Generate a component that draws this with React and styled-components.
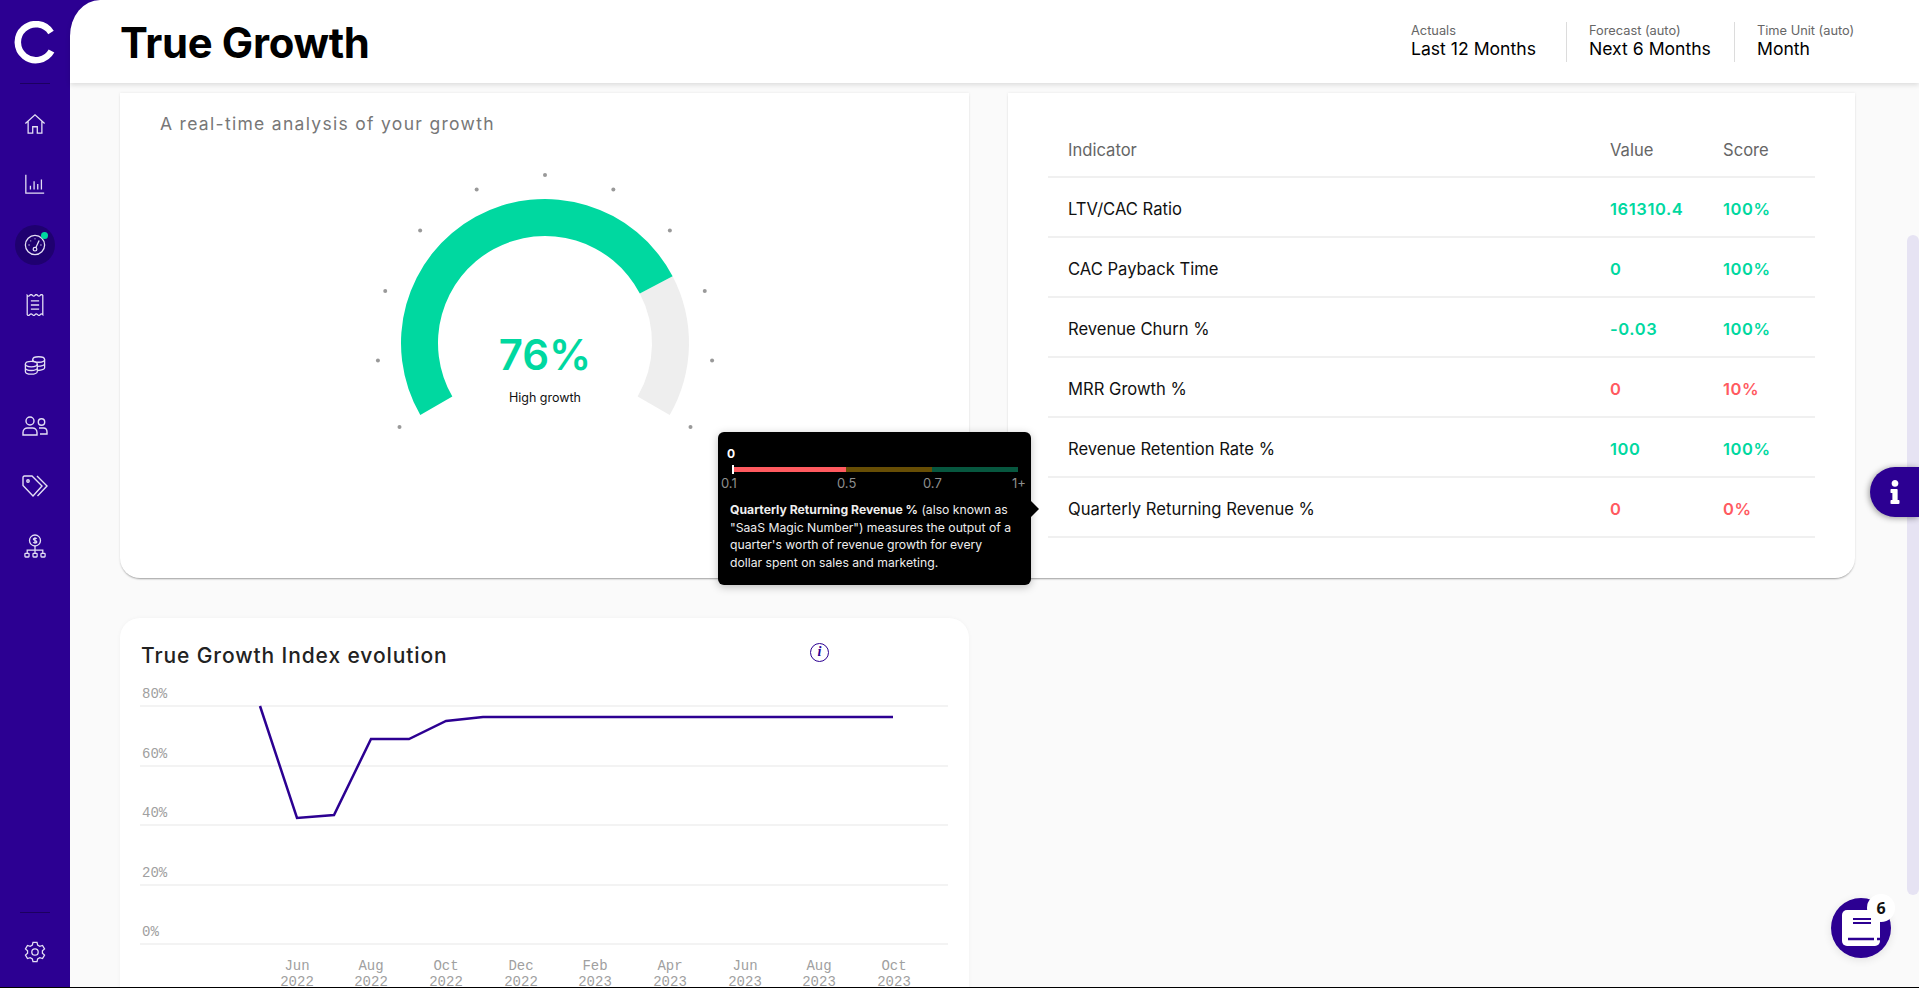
import React from "react";
import styled, { createGlobalStyle } from "styled-components";
import { FaInfo } from "react-icons/fa";

const PURPLE = "#2c0092";
const GREEN = "#00d8a0";
const RED = "#ff5a5f";
const FONT = `"Inter", "Liberation Sans", sans-serif`;
const MONO = `"Liberation Mono", "DejaVu Sans Mono", monospace`;

const GlobalStyle = createGlobalStyle`
  html, body {
    margin: 0;
    height: 100%;
    overflow: hidden;
    background: #000;
  }
  * {
    box-sizing: border-box;
  }
`;

const filters = [
  { label: "Actuals", value: "Last 12 Months", width: 155 },
  { label: "Forecast (auto)", value: "Next 6 Months", width: 168 },
  { label: "Time Unit (auto)", value: "Month", width: 125 },
];

const indicators = [
  { name: "LTV/CAC Ratio", value: "161310.4", score: "100%", good: true },
  { name: "CAC Payback Time", value: "0", score: "100%", good: true },
  { name: "Revenue Churn %", value: "-0.03", score: "100%", good: true },
  { name: "MRR Growth %", value: "0", score: "10%", good: false },
  { name: "Revenue Retention Rate %", value: "100", score: "100%", good: true },
  { name: "Quarterly Returning Revenue %", value: "0", score: "0%", good: false },
];

const HomeIcon = () => (
  <NavSvg viewBox="0 0 24 24">
    <path d="M1.5 11.5 12 2l10.500 9.500M4.500 9v13h5v-7h5v7h5V9" />
  </NavSvg>
);

const BarsIcon = () => (
  <NavSvg viewBox="0 0 24 24">
    <path d="M2 2v20h20M7 18v-4M11 18V9M15 18v-6M19 18V7" />
  </NavSvg>
);

const GaugeIcon = () => (
  <NavSvg viewBox="0 0 24 24">
    <circle cx="12" cy="12" r="10.500" />
    <circle cx="12" cy="16.500" r="2" />
    <path d="M13 14.700 16.500 7M5 12h1M7 7.500h.8M12 5v.8M19 12h-1" />
  </NavSvg>
);

const ReceiptIcon = () => (
  <NavSvg viewBox="0 0 24 24">
    <path d="M3.500 1.500q1.400 1.800 2.800 0t2.900 0 2.800 0 2.800 0 2.900 0 2.800 0v21q-1.400-1.800-2.800 0t-2.900 0-2.800 0-2.800 0-2.900 0-2.800 0zM7.500 7.500h9M7.500 12h9M7.500 16.500h9" />
  </NavSvg>
);

const CoinsIcon = () => (
  <NavSvg viewBox="0 0 24 24">
    <ellipse cx="16" cy="6" rx="6.500" ry="3" />
    <ellipse cx="8" cy="11" rx="6.500" ry="3" />
    <path d="M1.500 11v8c0 1.700 2.900 3 6.500 3s6.500-1.300 6.500-3v-8M1.500 15c0 1.700 2.900 3 6.500 3s6.500-1.300 6.500-3M9.500 6v2M22.500 6v9c0 1.400-2 2.600-8 3M22.500 10.500c0 1.400-3 2.600-8 3" />
  </NavSvg>
);

const UsersIcon = () => (
  <NavSvg viewBox="0 0 26 20" $width={26} $height={20}>
    <circle cx="8" cy="5" r="4" />
    <circle cx="19.500" cy="6" r="3.200" />
    <path d="M1 19v-2.500C1 13.500 3.500 12 5.500 12h5c2 0 4.500 1.500 4.500 4.500V19zM17 12h4.500c2 0 3.500 1.500 3.500 4v2h-7" />
  </NavSvg>
);

const TagsIcon = () => (
  <NavSvg viewBox="0 0 26 22" $width={26} $height={22}>
    <path d="M1 2.500C1 1.500 1.500 1 2.500 1H10l10 10-9 10L1 10.500zM15 1l10 10-9.500 10" />
    <circle cx="6" cy="6" r="1.200" />
  </NavSvg>
);

const OrgIcon = () => (
  <NavSvg viewBox="0 0 24 26" $width={22} $height={24}>
    <circle cx="12" cy="7" r="6" />
    <path d="M14 5c-.8-1-3.500-1-3.800.5C10 7 14 6.800 14 8.500c0 1.500-3 1.500-4 .5M12 3.500v7M12 13v4M3.500 21v-3.500h17V21M12 17.500V21" />
    <rect x="1" y="21" width="4.500" height="4" rx=".8" />
    <rect x="9.800" y="21" width="4.500" height="4" rx=".8" />
    <rect x="18.500" y="21" width="4.500" height="4" rx=".8" />
  </NavSvg>
);

const SettingsIcon = () => (
  <NavSvg viewBox="0 0 24 24">
    <circle cx="12" cy="12" r="3.500" />
    <path d="M9.800 1.500h4.400l.7 3 2.300 1.300 3-.9 2.200 3.800-2.300 2.100v2.400l2.300 2.100-2.200 3.800-3-.9-2.300 1.300-.7 3H9.800l-.7-3-2.300-1.300-3 .9-2.200-3.800 2.300-2.100v-2.400L1.600 8.700l2.200-3.800 3 .9 2.300-1.300z" />
  </NavSvg>
);

const navItems = [
  { icon: HomeIcon },
  { icon: BarsIcon },
  { icon: GaugeIcon, active: true },
  { icon: ReceiptIcon },
  { icon: CoinsIcon },
  { icon: UsersIcon },
  { icon: TagsIcon },
  { icon: OrgIcon },
];

const polar = (r, deg) => {
  const a = (deg * Math.PI) / 180;
  return [200 + r * Math.cos(a), 200 - r * Math.sin(a)];
};

const arcPath = (from, to, outer, inner) => {
  const [x1, y1] = polar(outer, from);
  const [x2, y2] = polar(outer, to);
  const [x3, y3] = polar(inner, to);
  const [x4, y4] = polar(inner, from);
  const large = from - to > 180 ? 1 : 0;
  return `M${x1} ${y1}A${outer} ${outer} 0 ${large} 1 ${x2} ${y2}L${x3} ${y3}A${inner} ${inner} 0 ${large} 0 ${x4} ${y4}Z`;
};

const Gauge = ({ percent }) => {
  const end = 210 - 240 * (percent / 100);
  const dots = Array.from({ length: 11 }, (_, i) => polar(168, 210 - i * 24));
  return (
    <GaugeSvg viewBox="0 0 400 300">
      {dots.map(([x, y], i) => (
        <circle key={i} cx={x} cy={y} r="2" fill="#999" />
      ))}
      <path d={arcPath(end, -30, 144, 107)} fill="#eeeeee" />
      <path d={arcPath(210, end, 144, 107)} fill={GREEN} />
      <GaugeValue x="200" y="227" textAnchor="middle">
        {percent}%
      </GaugeValue>
      <GaugeLabel x="200" y="259" textAnchor="middle">
        High growth
      </GaugeLabel>
    </GaugeSvg>
  );
};

const chartLines = [
  { label: "80%", y: 26 },
  { label: "60%", y: 86 },
  { label: "40%", y: 145 },
  { label: "20%", y: 205 },
  { label: "0%", y: 264 },
];

const chartMonths = [
  ["Jun", 177],
  ["Aug", 251],
  ["Oct", 326],
  ["Dec", 401],
  ["Feb", 475],
  ["Apr", 550],
  ["Jun", 625],
  ["Aug", 699],
  ["Oct", 774],
];

const monthYears = ["2022", "2022", "2022", "2022", "2023", "2023", "2023", "2023", "2023"];

const LineChart = () => (
  <ChartSvg viewBox="0 0 849 320">
    {chartLines.map((line) => (
      <g key={line.label}>
        <line x1="20" x2="828" y1={line.y} y2={line.y} stroke="#efefef" strokeWidth="1.500" />
        <AxisText x="22" y={line.y - 8}>
          {line.label}
        </AxisText>
      </g>
    ))}
    <polyline
      points="140,26 177,138 214,135 251,59 289,59 326,41 363,37 773,37"
      fill="none"
      stroke={PURPLE}
      strokeWidth="2.500"
    />
    {chartMonths.map(([month, x], i) => (
      <g key={`${month}${i}`}>
        <AxisText x={x} y="290" textAnchor="middle">
          {month}
        </AxisText>
        <AxisText x={x} y="306" textAnchor="middle">
          {monthYears[i]}
        </AxisText>
      </g>
    ))}
  </ChartSvg>
);

const App = () => {
  return (
    <Page>
      <GlobalStyle />
      <Sidebar>
        <LogoBlock>
          <LogoSvg viewBox="0 0 44 44">
            <path
              d="M38 11.500A18 18 0 1 0 38.500 30"
              fill="none"
              stroke="#fff"
              strokeWidth="6.500"
            />
          </LogoSvg>
        </LogoBlock>
        <Nav>
          {navItems.map((item, index) => (
            <NavItem key={index}>
              <NavBubble $active={item.active}>
                <item.icon />
                {item.active && <NavDot />}
              </NavBubble>
            </NavItem>
          ))}
        </Nav>
        <SidebarFooter>
          <SettingsIcon />
        </SidebarFooter>
      </Sidebar>
      <Main>
        <Header>
          <Title>True Growth</Title>
          <Filters>
            {filters.map((filter, index) => (
              <Filter key={filter.label} $width={filter.width} $first={index === 0}>
                <FilterLabel>{filter.label}</FilterLabel>
                <FilterValue>{filter.value}</FilterValue>
              </Filter>
            ))}
          </Filters>
        </Header>
        <Content>
          <Cards>
            <IndexCard>
              <Subtitle>A real-time analysis of your growth</Subtitle>
              <Gauge percent={76} />
            </IndexCard>
            <TableCard>
              <TableHead>
                <HeadCell>Indicator</HeadCell>
                <HeadCell>Value</HeadCell>
                <HeadCell>Score</HeadCell>
              </TableHead>
              {indicators.map((row) => (
                <TableRow key={row.name}>
                  <NameCell>{row.name}</NameCell>
                  <ScoreCell $good={row.good}>{row.value}</ScoreCell>
                  <ScoreCell $good={row.good}>{row.score}</ScoreCell>
                </TableRow>
              ))}
            </TableCard>
            <Tooltip>
              <TipValue>0</TipValue>
              <TipBar>
                <TipSegment $width={114} $color="#ff5a5f" />
                <TipSegment $width={86} $color="#674e05" />
                <TipSegment $width={86} $color="#07573f" />
                <TipTick />
              </TipBar>
              <TipScale>
                <TipMark $width={116}>0.1</TipMark>
                <TipMark $width={86}>0.5</TipMark>
                <TipMark $width={89}>0.7</TipMark>
                <TipMark $width={20}>1+</TipMark>
              </TipScale>
              <TipText>
                <TipStrong>Quarterly Returning Revenue %</TipStrong> (also known as
                <br />
                "SaaS Magic Number") measures the output of a
                <br />
                quarter's worth of revenue growth for every
                <br />
                dollar spent on sales and marketing.
              </TipText>
            </Tooltip>
            <ChartCard>
              <ChartHeader>
                <ChartTitle>True Growth Index evolution</ChartTitle>
                <InfoBadge>i</InfoBadge>
              </ChartHeader>
              <LineChart />
            </ChartCard>
          </Cards>
          <ScrollThumb />
          <InfoTab>
            <FaInfo size={24} color="#fff" />
          </InfoTab>
          <NotesButton>
            <svg width="38" height="36" viewBox="0 0 38 36">
              <rect width="38" height="36" rx="5" fill="#fff" />
              <path d="M11 9h18M11 13h18" stroke={PURPLE} strokeWidth="1.800" />
              <path d="M6 29h26M35 29h3" stroke={PURPLE} strokeWidth="2.500" />
            </svg>
            <NotesCount>6</NotesCount>
          </NotesButton>
        </Content>
      </Main>
    </Page>
  );
};

export default App;

const Page = styled.div`
  display: flex;
  height: 987px;
  font-family: ${FONT};
  overflow: hidden;
`;

const Sidebar = styled.aside`
  display: flex;
  flex-direction: column;
  align-items: center;
  width: 70px;
  flex: none;
  background: ${PURPLE};
`;

const LogoBlock = styled.div`
  display: flex;
  align-items: center;
  justify-content: center;
  width: 30px;
  height: 84px;
  padding-top: 2px;
  flex: none;
  border-bottom: 1px solid #1c0060;
`;

const LogoSvg = styled.svg`
  width: 44px;
  height: 44px;
  flex: none;
`;

const Nav = styled.nav`
  display: flex;
  flex-direction: column;
  padding-top: 10px;
  flex: 1;
`;

const NavItem = styled.div`
  display: flex;
  align-items: center;
  justify-content: center;
  height: 60.3px;
`;

const NavBubble = styled.div`
  position: relative;
  display: flex;
  align-items: center;
  justify-content: center;
  width: 40px;
  height: 40px;
  border-radius: 50%;
  background: ${(props) => (props.$active ? "#1f0070" : "transparent")};
`;

const NavDot = styled.span`
  position: absolute;
  top: 7px;
  right: 7px;
  width: 7px;
  height: 7px;
  border-radius: 50%;
  background: ${GREEN};
`;

const NavSvg = styled.svg`
  width: ${(props) => props.$width || 22}px;
  height: ${(props) => props.$height || 22}px;
  flex: none;
  fill: none;
  stroke: #e4dff5;
  stroke-width: 1.4;
`;

const SidebarFooter = styled.div`
  display: flex;
  align-items: center;
  justify-content: center;
  width: 30px;
  height: 75px;
  padding-top: 4px;
  flex: none;
  border-top: 1px solid #1c0060;
`;

const Main = styled.main`
  display: flex;
  flex-direction: column;
  flex: 1;
  min-width: 0;
  background: ${PURPLE};
`;

const Header = styled.header`
  position: relative;
  z-index: 2;
  display: flex;
  align-items: center;
  justify-content: space-between;
  height: 83px;
  flex: none;
  padding: 0 60px 0 50px;
  background: #fff;
  border-top-left-radius: 30px 36px;
  box-shadow: 0 2px 5px rgba(0, 0, 0, 0.12);
`;

const Title = styled.h1`
  margin: 2px 0 0;
  font-size: 41.800px;
  font-weight: 700;
  letter-spacing: -0.3px;
  color: #000;
`;

const Filters = styled.div`
  display: flex;
`;

const Filter = styled.div`
  display: flex;
  flex-direction: column;
  width: ${(props) => props.$width}px;
  height: 40px;
  padding-top: 1px;
  padding-left: ${(props) => (props.$first ? 0 : 22)}px;
  border-left: ${(props) => (props.$first ? "none" : "1px solid #dcdcdc")};
`;

const FilterLabel = styled.div`
  font-size: 12.800px;
  line-height: 15px;
  color: #666;
`;

const FilterValue = styled.div`
  font-size: 17.600px;
  line-height: 21px;
  color: #000;
`;

const Content = styled.div`
  position: relative;
  flex: 1;
  min-height: 0;
  padding: 10px 64px 0 50px;
  background: #fafafa;
  overflow: hidden;
`;

const Cards = styled.div`
  position: relative;
  display: grid;
  grid-template-columns: 1fr 1fr;
  grid-template-rows: 485px auto;
  column-gap: 39px;
  row-gap: 40px;
`;

const TopCard = styled.section`
  background: #fff;
  border-radius: 0 0 20px 20px;
  box-shadow: 0 2px 2px -1px rgba(0, 0, 0, 0.35), 0 0 3px rgba(0, 0, 0, 0.08);
`;

const IndexCard = styled(TopCard)`
  display: flex;
  flex-direction: column;
  align-items: center;
  padding-top: 21px;
`;

const Subtitle = styled.div`
  align-self: flex-start;
  padding-left: 40px;
  font-size: 17.500px;
  line-height: 20px;
  letter-spacing: 1.3px;
  color: #777;
`;

const GaugeSvg = styled.svg`
  width: 400px;
  height: 300px;
  margin-top: 9px;
`;

const GaugeValue = styled.text`
  font-family: ${FONT};
  font-size: 42px;
  font-weight: 600;
  fill: ${GREEN};
`;

const GaugeLabel = styled.text`
  font-family: ${FONT};
  font-size: 12.500px;
  fill: #111;
`;

const TableCard = styled(TopCard)`
  padding: 29px 40px 40px;
`;

const tableColumns = `
  display: grid;
  grid-template-columns: 542px 113px 1fr;
  align-items: center;
  padding-left: 20px;
  border-bottom: 2px solid #f0f0f0;
`;

const TableHead = styled.div`
  ${tableColumns}
  height: 56px;
  padding-top: 2px;
`;

const HeadCell = styled.div`
  font-size: 16.600px;
  color: #666;
`;

const TableRow = styled.div`
  ${tableColumns}
  height: 60px;
  padding-top: 4px;
`;

const NameCell = styled.div`
  font-size: 16.600px;
  color: #111;
`;

const ScoreCell = styled.div`
  font-size: 16.500px;
  font-weight: 600;
  letter-spacing: 0.6px;
  color: ${(props) => (props.$good ? GREEN : RED)};
`;

const Tooltip = styled.div`
  position: absolute;
  z-index: 3;
  left: 598px;
  top: 339px;
  width: 313px;
  height: 153px;
  padding: 14px 12px 0 9px;
  background: #000;
  border-radius: 6px;
  box-shadow: 0 2px 8px rgba(0, 0, 0, 0.25);
  color: #fff;
  &::after {
    content: "";
    position: absolute;
    top: 69px;
    right: -8px;
    border-style: solid;
    border-width: 8px 0 8px 8px;
    border-color: transparent transparent transparent #000;
  }
`;

const TipValue = styled.div`
  font-size: 12px;
  font-weight: 700;
  line-height: 15px;
`;

const TipBar = styled.div`
  position: relative;
  display: flex;
  margin: 6px 0 0 5px;
  height: 5px;
`;

const TipSegment = styled.div`
  width: ${(props) => props.$width}px;
  background: ${(props) => props.$color};
`;

const TipTick = styled.span`
  position: absolute;
  left: 0;
  top: -2px;
  width: 2px;
  height: 9px;
  background: #fff;
`;

const TipScale = styled.div`
  display: flex;
  margin: 4px 0 0 -6px;
`;

const TipMark = styled.div`
  width: ${(props) => props.$width}px;
  flex: none;
  font-size: 13px;
  line-height: 15px;
  white-space: nowrap;
  color: #8e8e8e;
`;

const TipText = styled.p`
  margin: 10px 0 0 3px;
  font-size: 12.200px;
  line-height: 17.500px;
  white-space: nowrap;
  color: #eee;
`;

const TipStrong = styled.b`
  font-weight: 700;
`;

const ChartCard = styled.section`
  background: #fff;
  border-radius: 20px 20px 0 0;
  box-shadow: 0 0 4px rgba(0, 0, 0, 0.04);
`;

const ChartHeader = styled.div`
  display: flex;
  align-items: center;
  justify-content: space-between;
  padding: 12px 140px 0 21px;
  height: 62px;
`;

const ChartTitle = styled.h2`
  margin: 0;
  font-size: 21px;
  font-weight: 500;
  letter-spacing: 0.9px;
  color: #222;
`;

const InfoBadge = styled.span`
  display: flex;
  align-items: center;
  justify-content: center;
  width: 19px;
  height: 19px;
  margin-top: -6px;
  border: 1.5px solid ${PURPLE};
  border-radius: 50%;
  font-family: "Liberation Serif", serif;
  font-size: 14px;
  font-weight: 700;
  font-style: italic;
  color: ${PURPLE};
`;

const ChartSvg = styled.svg`
  display: block;
  width: 849px;
  height: 320px;
`;

const AxisText = styled.text`
  font-family: ${MONO};
  font-size: 14px;
  fill: #a0a0a0;
`;

const ScrollThumb = styled.div`
  position: absolute;
  top: 152px;
  right: 0;
  width: 12px;
  height: 660px;
  border-radius: 6px;
  background: #e6e3f3;
`;

const InfoTab = styled.button`
  position: absolute;
  top: 384px;
  right: 0;
  display: flex;
  align-items: center;
  justify-content: center;
  width: 49px;
  height: 50px;
  border: none;
  border-radius: 25px 0 0 25px;
  background: ${PURPLE};
  box-shadow: -1px 1px 6px rgba(0, 0, 0, 0.4);
`;

const NotesButton = styled.button`
  position: absolute;
  top: 815px;
  right: 28px;
  display: flex;
  align-items: center;
  justify-content: center;
  width: 60px;
  height: 60px;
  padding: 0;
  border: none;
  border-radius: 50%;
  background: ${PURPLE};
  box-shadow: 0 2px 8px rgba(0, 0, 0, 0.1);
`;

const NotesCount = styled.span`
  position: absolute;
  top: -4px;
  right: -4px;
  display: flex;
  align-items: center;
  justify-content: center;
  width: 28px;
  height: 28px;
  border-radius: 50%;
  background: #fff;
  font-family: "Open Sans", sans-serif;
  font-size: 16px;
  font-weight: 700;
  color: #111;
`;
